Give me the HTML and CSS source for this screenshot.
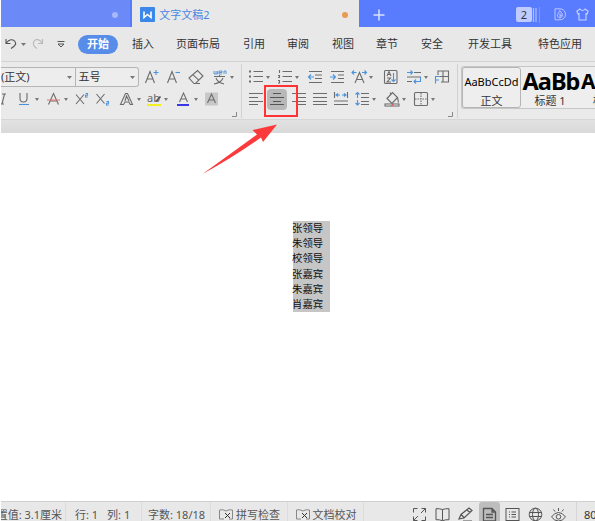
FILE: index.html
```html
<!DOCTYPE html>
<html lang="zh-CN">
<head>
<meta charset="utf-8">
<title>文字文稿2</title>
<link rel="stylesheet" href="styles.css">
</head>
<body>
<div class="app">
  <header class="tabs">
    <div class="tab-prev"><span class="dot"></span></div>
    <div class="tab-active">
      <svg class="logo" width="15" height="15" viewBox="0 0 15 15"><rect width="15" height="15" rx="1" fill="#3b87ea"/><path d="M4 4.500v6l3.500-3 3.500 3v-6" fill="none" stroke="#fff" stroke-width="1.600"/></svg>
      <span>文字文稿2</span><span class="dot orange"></span>
    </div>
    <div class="tab-rest">
      <svg class="plus" width="12" height="12"><path d="M6 .5v11M.5 6h11" stroke="#d9e1ff" stroke-width="1.500"/></svg>
      <span class="count">2</span>
      <svg class="stack" width="8" height="16"><path d="M1.500 1v14M4 1v14" stroke="#aebfff" stroke-width="1.200"/><path d="M7.500 0v16" stroke="#7d97ff"/></svg>
      <svg class="docer" width="12" height="13" fill="none" stroke="#b9c7ff"><path d="M1 .8h5a5.400 5.400 0 0 1 0 11H1z"/><path d="M5.700 2.500C8 5 8.700 6 8 8.500 7 10.500 4 10 3.500 8 3.200 6 4.500 5.500 5.700 2.500M6 5v5M6 8l2-1"/></svg>
      <svg class="shirt" width="13" height="13" fill="none" stroke="#c7d2ff" stroke-width="1.100"><path d="M4 1 .8 3.300 2 6l1-.4V12h7V5.600l1 .4 1.200-2.700L9 1Q6.500 4 4 1z"/></svg>
    </div>
  </header>
  <nav class="menu">
    <svg width="12" height="12" fill="none" stroke="#555" stroke-width="1.100"><path d="M1 1v4.500h4.500M1.300 5C4 1.500 8 .5 10 3.500c2 3-1 5-4 7"/></svg>
    <svg class="caret" width="5" height="3"><path d="M0 0h5L2.500 3z"/></svg>
    <svg width="12" height="12" fill="none" stroke="#b8b8b8" stroke-width="1.100"><path d="M10.500 1v4.500H6M10.200 5C8 1.500 4 0 1.800 3.500 0 7 2.500 9 5 10.500"/></svg>
    <svg width="8" height="8" fill="none" stroke="#555"><path d="M.5 1.500h7M1 4h6L4 7z"/></svg>
    <b>开始</b><span>插入</span><span>页面布局</span><span>引用</span><span>审阅</span><span>视图</span><span>章节</span><span>安全</span><span>开发工具</span><span>特色应用</span>
  </nav>
  <section class="ribbon">
    <div class="group font-group">
      <div class="row font-top">
        <div class="selects"><div>(正文)<svg class="caret" width="5" height="3"><path d="M0 0h5L2.500 3z"/></svg></div><div>五号<svg class="caret" width="5" height="3"><path d="M0 0h5L2.500 3z"/></svg></div></div>
        <div><svg class="ic" viewBox="0 0 14 16"><path d="M.5 14 5 2.500l4.500 11.500M2.200 10h5.600"/><path class="bl" d="M11 1v5M8.500 3.500h5"/></svg></div>
        <div><svg class="ic" viewBox="0 0 14 16"><path d="M.5 14 5 2.500l4.500 11.500M2.200 10h5.600"/><path class="bl" d="M8.500 3.500h4.500"/></svg></div>
        <div><svg class="ic" viewBox="0 0 14 16"><path d="M0 9 8.500 1.500l5.500 5.500-7.500 7.500H5zM3.800 5.700l6 5.500M5 14.500h6"/></svg></div>
        <div><svg class="ic" viewBox="0 0 14 16"><path class="bl thin" d="M1 2v3h2V2M3 5h1.500V2M6 3.500h3V2H6v3h3M11 5V2h2v3"/><path d="M1 7.500h11M6.500 6v1.500M3 9c1 3 4 5 8 6M10 9c-1 3-4 5-9 6"/></svg><i></i></div>
      </div>
      <div class="row font-bottom">
        <div><svg class="ic" viewBox="0 0 14 16"><path d="M1 3h4M-1 13h4M3.500 3 1 13"/></svg></div>
        <div><svg class="ic" viewBox="0 0 14 16"><path d="M2 2v5.500q0 3.500 3.500 3.500T9 7.500V2"/><path class="bl" d="M1 13.500h10"/></svg><i></i></div>
        <div><svg class="ic" viewBox="0 0 14 16"><path d="m1.500 13.500 5-11 5 11M3.500 10h6"/><path d="M0 9h13" stroke="#e47b7b"/></svg><i></i></div>
        <div><svg class="ic" viewBox="0 0 14 16"><path d="m1 3.500 8 9.500M9 3.500 1 13"/><path class="bl" d="M10.500 2.500h2v1.700h-2V6h2.300"/></svg></div>
        <div><svg class="ic" viewBox="0 0 14 16"><path d="m.5 3 8 9.500M8.500 3l-8 9.500"/><path class="bl" d="M10.500 10.500h2v1.700h-2V14h2.300"/></svg></div>
        <div><svg class="ic" viewBox="0 0 14 16"><path d="M.5 13.500 5.500 2.500h2l5 11h-2.300L9 11H5l-1.500 2.500zM5 10l1.500-5L9 10"/></svg><i></i></div>
        <div><svg class="ic" viewBox="0 0 14 16"><text x="0" y="11">ab</text><path d="m9 10.500 4.500-5" stroke="#555" stroke-width="1.800"/><path d="M0 14h14" stroke="#f3ef20" stroke-width="2"/></svg><i></i></div>
        <div><svg class="ic" viewBox="0 0 14 16"><path d="M2.500 11 6.500 2l4 9M4 8h5"/><path d="M0 14h12" stroke="#1717e8" stroke-width="1.700"/></svg><i></i></div>
        <div><svg class="ic" viewBox="0 0 14 16"><path d="M0 1.500h13v13H0z" fill="#c8c8c8" stroke="none"/><path d="m2.500 12 4-9 4 9M4 9h5"/></svg></div>
      </div>
      <svg class="launch" width="5" height="5"><path d="M4.500 0v4.500H0"/></svg>
    </div>
    <div class="group para-group">
      <div class="row para-top">
        <div><svg class="ic" viewBox="0 0 14 16"><path d="M4.500 2.500H14M4.500 7.500H14M4.500 12.500H14"/><path d="M0 2.500h2M0 7.500h2M0 12.500h2" stroke-width="2"/></svg><i></i></div>
        <div><svg class="ic" viewBox="0 0 14 16"><path d="M4.500 2.500H14M4.500 7.500H14M4.500 12.500H14M1.500 1v3M0 6.500h1.500v2H0M0 11.500h1.500v2.500H0"/></svg><i></i></div>
        <div><svg class="ic" viewBox="0 0 14 16"><path d="M1 2.500h13M7 6h7M7 9.500h7M1 13.500h13"/><path class="bl" d="M6 8H.5M3 5.500.5 8 3 10.500"/></svg></div>
        <div><svg class="ic" viewBox="0 0 14 16"><path d="M1 2.500h13M8 6h6M8 9.500h6M1 13.500h13"/><path class="bl" d="M0 8h5.500M3 5.500 5.500 8 3 10.500"/></svg></div>
        <div><svg class="ic" viewBox="0 0 14 16"><path d="M3 14 7.500 3.500 12 14M4.500 10.500h6"/><path class="bl" d="M4.500 3.500H0M2 1.500 0 3.500l2 2M10 3.500h4.500M12.500 1.500l2 2-2 2"/></svg><i></i></div>
        <div><svg class="ic" viewBox="0 0 14 16"><rect x=".5" y="1.500" width="12.500" height="13" rx="1"/><path d="m3 7 2-4.500L7 7M3.500 5.500h3M3 9h3.500L3 13h4"/><path class="bl" d="M9.500 4v8.500M7.500 10.500l2 2 2-2"/></svg></div>
        <div><svg class="ic" viewBox="0 0 14 16"><path d="M7 3.500h7M0 8h14M0 12.500h5"/><path class="bl" d="M0 3.500h5M3.500 1.500l2 2-2 2M13.500 8v4.500H7M9 10.500l-2 2 2 2"/></svg><i></i></div>
        <div><svg class="ic" viewBox="0 0 14 16"><path d="M3 6V2h10.500v11H6M8 2v11M3 7.500h10.500"/><path class="bl" d="M.5 14.500V7.500H5M.5 11H4"/></svg></div>
      </div>
      <div class="row para-bottom">
        <div><svg class="ic" viewBox="0 0 14 16"><path d="M0 2.500h14M0 6.500h9M0 10.500h14M0 13.500h9"/></svg></div>
        <div class="picked"><svg class="ic" viewBox="0 0 14 16"><path d="M3 2.500h8M0 6.500h14M3 10.500h8M0 13.500h14"/></svg><span class="marker"></span></div>
        <div><svg class="ic" viewBox="0 0 14 16"><path d="M0 2.500h14M5 6.500h9M0 10.500h14M5 13.500h9"/></svg></div>
        <div><svg class="ic" viewBox="0 0 14 16"><path d="M0 2.500h14M0 6.500h14M0 10.500h14M0 13.500h14"/></svg></div>
        <div><svg class="ic" viewBox="0 0 14 16"><path d="M.5 1v6M13.500 1v6M0 10h14M0 13.500h14"/><path class="bl" d="M2 4h4M4 2.500 2 4l2 1.500M8 4h4M10 2.500 12 4l-2 1.500"/></svg></div>
        <div><svg class="ic" viewBox="0 0 14 16"><path d="M6 2.500h8M6 6.500h8M6 10.500h8M6 13.500h8"/><path class="bl" d="M2.500 7V2M.5 3.500l2-2 2 2M2.500 9v5M.5 12l2 2 2-2"/></svg><i></i></div>
        <div><svg class="ic" viewBox="0 0 14 16"><path d="M2 7.500 7.500 1.500l5 5-5.500 6zM5.500 3.500v-2M12.500 6.500l1 5" stroke-width="1.200"/><rect x="0" y="13" width="14" height="2" fill="#fff"/><path d="m6.500 15 2-2" stroke="#e45555"/></svg><i></i></div>
        <div><svg class="ic" viewBox="0 0 14 16"><rect x=".5" y="1.500" width="13" height="13" rx="1"/><path d="M7 2v12M1 8h12" stroke-dasharray="1.500 1"/></svg><i></i></div>
      </div>
      <svg class="launch" width="5" height="5"><path d="M4.500 0v4.500H0"/></svg>
    </div>
    <div class="gallery">
      <div class="style chosen"><p>AaBbCcDd</p><span>正文</span></div>
      <div class="style heading"><p>AaBb</p><span>标题 1</span></div>
      <div class="style next"><p>A</p><span>标</span></div>
    </div>
  </section>
  <main class="workspace">
    <svg class="arrow" width="76" height="52"><path d="M.5 50 55 10.500 50.500 6 75 .5 61 18l-2-4.500Q30 34 .5 50z" fill="#fb3b3b"/></svg>
    <article class="page"><div class="selection"><p>张领导</p><p>朱领导</p><p>校领导</p><p>张嘉宾</p><p>朱嘉宾</p><p>肖嘉宾</p></div></article>
  </main>
  <footer class="status">
    <div class="cell pos"><span>置值: 3.1厘米</span></div>
    <div class="cell rowcol"><span>行: 1</span><span>列: 1</span></div>
    <div class="cell words">字数: 18/18</div>
    <div class="cell check"><svg width="14" height="12" class="book"><path d="M7 2Q4 0 .5 1v9H5M7 2q3-2 6.500-1v9H10" /><path class="x" d="m6 4 5 5M11 4 6 9"/></svg>拼写检查</div>
    <div class="cell check"><svg width="14" height="12" class="book"><path d="M7 2Q4 0 .5 1v9H5M7 2q3-2 6.500-1v9H10" /><path class="x" d="m6 4 5 5M11 4 6 9"/></svg>文档校对</div>
    <div class="views">
      <div><svg class="vi" viewBox="0 0 15 15"><path d="M5.500 1.500H1.500v4M9.500 1.500h4v4M5.500 13.500h-4v-4M9.500 13.500h4v-4M9 6l4.500-4.500M6 9l-4.500 4.500"/></svg></div>
      <div><svg class="vi" viewBox="0 0 15 15"><path d="M7.500 2.500q-3-1-6.500-.8v11q3.500-.2 6.500 1 3-1.200 6.500-1v-11q-3.500-.2-6.500.8zM7.500 2.500v11"/></svg></div>
      <div><svg class="vi" viewBox="0 0 15 15"><path d="m1 12 2-4.500L11 1l3 2.500-8 7.500zM3 7.500 6 10.500M9 3l3 2.500M5 14h9" stroke-width="1.200"/></svg></div>
      <div class="on"><svg class="vi" viewBox="0 0 15 15"><path d="M1.500 1.500H10L13.500 5v9h-12zM10 1.500V5h3.500M4 7.500h7M4 10.500h7" stroke-width="1.300"/></svg></div>
      <div><svg class="vi" viewBox="0 0 15 15"><rect x="1" y="1.500" width="13" height="12"/><path d="M4 5h1M4 7.500h1M4 10h1M6.500 5H11M6.500 7.500H11M6.500 10H11"/></svg></div>
      <div><svg class="vi" viewBox="0 0 15 15"><circle cx="7.500" cy="7.500" r="6.300"/><ellipse cx="7.500" cy="7.500" rx="3" ry="6.300"/><path d="M1.500 5.500h12M1.500 9.500h12"/></svg></div>
      <div><svg class="vi" viewBox="0 0 15 15"><path d="M.5 10Q3.500 5.500 7.500 5.500t7 4.500q-3 4-7 4t-7-4zM7.500 1v3M2.500 2.500l1.500 2M12.500 2.500l-1.500 2"/><circle cx="7.500" cy="9.800" r="2.300"/></svg></div>
    </div>
    <div class="zoom">80</div>
  </footer>
</div>
</body>
</html>
```
FILE: styles.css
```css
* { box-sizing: border-box; }
body { margin: 0; background: #fff; overflow: hidden; }
.app { width: 594px; height: 521px; margin-left: 1px; overflow: hidden; display: flex; flex-direction: column; font: 11px/16px "Noto Sans", "Noto Sans CJK SC", sans-serif; color: #333; background: #e8e8e8; white-space: nowrap; }
svg { display: block; flex: none; overflow: visible; }
p { margin: 0; }

.tabs { height: 27px; flex: none; display: flex; }
.tab-prev { width: 132px; background: #6b8af8; border-right: 2px solid #567aff; display: flex; align-items: center; justify-content: flex-end; padding: 2px 12px 0 0; }
.dot { width: 6px; height: 6px; border-radius: 50%; background: #a6b8fa; }
.tab-active { width: 228px; display: flex; align-items: center; padding: 2px 11px 0 8px; color: #4a86e0; }
.tab-active .logo { margin-right: 4px; }
.dot.orange { background: #e99c50; margin-left: auto; }
.tab-rest { flex: 1; background: #597cff; display: flex; align-items: center; padding: 2px 6px 0 14px; }
.count { width: 16px; height: 15px; margin-left: 131px; border-radius: 2px; background: #c0ccff; text-align: center; line-height: 15px; }
.docer { margin-left: 14px; }
.shirt { margin-left: 10px; }

.menu { height: 35px; flex: none; border-bottom: 1px solid #d3d3d3; display: grid; align-items: center; grid-template-columns: 16px 11px 25px 21px 54px 44px 67px 44px 45px 44px 45px 47px 70px 60px; padding-left: 4px; }
.menu b { width: 40px; height: 19px; border-radius: 10px; background: #578de8; color: #fff; text-align: center; line-height: 18px; }
.caret { fill: #777; }

.ribbon { height: 58px; flex: none; display: flex; border-bottom: 1px solid #d6d6d6; background: #eaeaea; }
.group { position: relative; flex: none; padding-top: 2px; border-right: 1px solid #d1d1d1; height: 54px; margin-top: 2px; }
.font-group { width: 241px; }
.para-group { width: 216px; padding-left: 7px; }
.row { display: grid; height: 22px; align-items: center; }
.row > div { display: flex; align-items: center; }
.ic { width: 14px; height: 16px; fill: none; stroke: #6c6c6c; stroke-width: 1.1; }
.ic .bl { stroke: #4b93dd; }
.ic .thin { stroke-width: .9; }
.ic text { font: 11px "Noto Sans", sans-serif; fill: #666; stroke: none; }
.row i { border: 2.5px solid transparent; border-top: 3px solid #777; border-bottom: 0; margin-left: 3px; }
.font-top { grid-template-columns: 144px 22px 22px 24px 28px; }
.font-bottom { grid-template-columns: 17px 29px 28px 21px 24px 27px 30px 28px 14px; }
.row .selects { width: 138px; height: 20px; border: 1px solid #b5b5b5; border-left: 0; border-radius: 0 3px 3px 0; align-items: stretch; background: #ededed; }
.selects div { display: flex; align-items: center; justify-content: space-between; padding: 0 3px 0 2px; width: 62px; }
.selects div:first-child { width: 76px; border-right: 1px solid #b5b5b5; padding-left: 0; }
.para-top { grid-template-columns: 29px 30px 22px 22px 32px 23px 28px 14px; }
.para-bottom { grid-template-columns: 18px 25px 21px 21px 21px 30px 29px 20px; }
.row .picked { position: relative; width: 20px; height: 21px; border-radius: 4px; background: #b8b8b8; justify-content: center; }
.picked .ic { stroke: #555; }
.marker { position: absolute; z-index: 2; left: -3px; top: -4px; width: 34px; height: 32px; border: 2px solid #f33; }
.launch { position: absolute; right: 4px; bottom: 1px; fill: none; stroke: #888; }
.gallery { width: 134px; flex: none; height: 43px; margin: 4px 0 0 3px; border: 1px solid #c6c6c6; border-right: 0; border-radius: 3px 0 0 3px; display: flex; background: #eee; }
.style { display: flex; flex-direction: column; align-items: center; color: #000; flex: none; }
.style p { height: 25px; line-height: 27px; }
.style span { color: #333; }
.chosen { width: 59px; border: 1px solid #b5b5b5; border-radius: 3px; }
.chosen p { font-size: 11px; }
.heading { width: 58px; }
.heading p, .next p { font: bold 24px/29px "Noto Sans", sans-serif; height: 26px; }
.heading p { font-size: 23.5px; letter-spacing: -1px; margin-right: -2px; }
.next { width: 16px; align-items: flex-start; }
.next p { font-size: 21px; margin-left: 2px; }
.next span { margin-left: 14px; }

.workspace { position: relative; flex: 1; padding-top: 13px; background: linear-gradient(#e2e2e2, #d9d9d9 13px); }
.page { height: 100%; background: #fff; padding: 88px 0 0 292px; }
.selection { width: 37px; height: 91px; background: #c6c6c6; color: #111; }
.selection p { font: 10.4px/14.2px "Noto Sans CJK SC", sans-serif; margin-left: -1px; height: 15.2px; }
.arrow { position: absolute; left: 201px; top: 4px; }

.status { height: 20px; flex: none; display: flex; border-top: 1px solid #d0d0d0; color: #555; line-height: 25px; font-size: 11px; }
.cell { flex: none; display: flex; align-items: center; height: 25px; border-right: 1px solid #dcdcdc; }
.pos { width: 65px; justify-content: flex-end; padding-right: 3px; }
.rowcol { width: 76px; padding-left: 9px; gap: 9px; }
.words { width: 69px; padding-left: 6px; }
.check { width: 76.5px; padding-left: 8px; gap: 3px; }
.book { fill: none; stroke: #888; }
.book .x { stroke: #333; }
.views { width: 169px; flex: none; margin-left: 43px; padding-left: 2px; display: grid; grid-template-columns: repeat(7, 23.2px); }
.views div { width: 21px; height: 24px; display: flex; align-items: center; justify-content: center; }
.views .on { background: #bdbdbd; border-radius: 3px; }
.vi { width: 15px; height: 15px; fill: none; stroke: #555; }
.zoom { border-left: 1px solid #d5d5d5; padding-left: 7px; color: #333; }
```
